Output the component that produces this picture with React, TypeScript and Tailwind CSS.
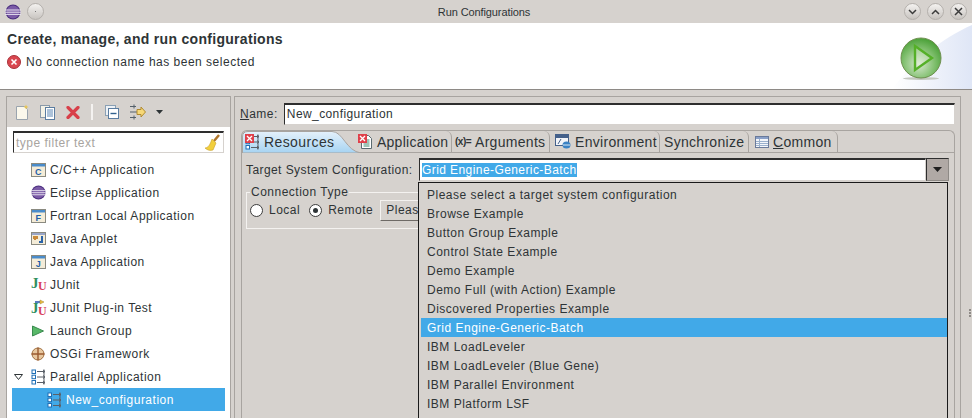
const font = "[font-family:'Liberation_Sans',Arial,sans-serif]";

function EclipseIcon({ size = 16 }: { size?: number }) {
  return (
    <svg width={size} height={size} viewBox="0 0 16 16">
      <circle cx="8" cy="8" r="7.5" fill="#4b2f7f" />
      <circle cx="8" cy="8" r="6.5" fill="#7a5aa6" />
      <path d="M0 6h16M0 8.2h16M0 10.4h16" stroke="#e8e2f0" strokeWidth="1" />
    </svg>
  );
}

function AppIcon({ letter }: { letter: string }) {
  return (
    <svg width="15" height="14" viewBox="0 0 15 14">
      <rect x="0.5" y="0.5" width="14" height="13" fill="#f4ecd8" stroke="#8a8a80" />
      <rect x="1" y="1" width="13" height="2.5" fill="#4a8ccb" />
      <text x="7.5" y="11.5" textAnchor="middle" fontSize="9" fontWeight="700" fontFamily="Liberation Sans" fill="#1f5ea8">
        {letter}
      </text>
    </svg>
  );
}

function AppletIcon() {
  return (
    <svg width="15" height="13" viewBox="0 0 15 13">
      <rect x="0.5" y="0.5" width="14" height="12" fill="#f4ecd8" stroke="#8a8a80" />
      <rect x="1" y="1" width="13" height="2" fill="#9aa6c8" />
      <path d="M2 4h5v3H5v1H3V7H2z" fill="#c98a3a" />
      <path d="M11 4v6H8" stroke="#2a63a8" strokeWidth="2" fill="none" />
    </svg>
  );
}

function JUnitIcon({ plugin = false }: { plugin?: boolean }) {
  return (
    <svg width="16" height="17" viewBox="0 0 16 17">
      {plugin && <path d="M4 3h6" stroke="#5a7cc0" strokeWidth="2" />}
      {plugin && <path d="M9 1l4 2-4 2z" fill="#f0c040" stroke="#a08030" strokeWidth="0.5" />}
      <text x="0" y={plugin ? 14 : 12} fontSize="15" fontWeight="700" fontFamily="Liberation Serif" fill="#2f8f5f">J</text>
      <text x="7" y={plugin ? 16 : 14} fontSize="12" fontWeight="700" fontFamily="Liberation Serif" fill="#d84060">U</text>
    </svg>
  );
}

function LaunchIcon() {
  return (
    <svg width="14" height="14" viewBox="0 0 14 14">
      <path d="M1.5 2l11 5-11 5z" fill="#58b868" stroke="#3a8a50" />
    </svg>
  );
}

function OsgiIcon() {
  return (
    <svg width="14" height="14" viewBox="0 0 14 14">
      <circle cx="7" cy="7" r="6" fill="#e8c8a0" stroke="#a07040" />
      <path d="M7 0.5v13M0.5 7h13" stroke="#9a5a30" strokeWidth="1.4" />
    </svg>
  );
}

function ParallelIcon({ size = 16 }: { size?: number }) {
  return (
    <svg width={size} height={size} viewBox="0 0 16 16" fill="none">
      <path d="M6 2.5h8M6 8h8M6 13.5h8M13 0.5v15" stroke="#5a6068" />
      <path d="M12 1l2 1.5-2 1.5M12 6.5l2 1.5-2 1.5M12 12l2 1.5-2 1.5" stroke="#5a6068" />
      <rect x="1" y="1" width="3.5" height="3.5" fill="#fff" stroke="#1f6fb5" />
      <rect x="1" y="6.2" width="3.5" height="3.5" fill="#fff" stroke="#1f6fb5" />
      <rect x="1" y="11.5" width="3.5" height="3.5" fill="#fff" stroke="#1f6fb5" />
    </svg>
  );
}

function ErrorIcon() {
  return (
    <svg width="14" height="14" viewBox="0 0 14 14">
      <circle cx="7" cy="7" r="6.5" fill="#d9464f" stroke="#a8323a" />
      <path d="M4.5 4.5l5 5M9.5 4.5l-5 5" stroke="#fff" strokeWidth="1.6" />
    </svg>
  );
}

function RunIcon() {
  return (
    <svg width="44" height="44" viewBox="0 0 44 44">
      <defs>
        <radialGradient id="runBall" cx="0.45" cy="0.65" r="0.7">
          <stop offset="0" stopColor="#d8e8d0" />
          <stop offset="0.55" stopColor="#82c070" />
          <stop offset="1" stopColor="#3f9a2c" />
        </radialGradient>
      </defs>
      <ellipse cx="22" cy="41.5" rx="18" ry="1.5" fill="#c4c8c0" />
      <circle cx="22" cy="21" r="20" fill="url(#runBall)" stroke="#6f8f50" />
      <path d="M16 9l17 12-17 12z" fill="#eef4e6" fillOpacity="0.35" stroke="#55b028" strokeWidth="2.4" />
    </svg>
  );
}

function HeaderSweep() {
  return (
    <svg className="absolute top-0 right-0" width="80" height="66" viewBox="0 0 80 66">
      <defs>
        <linearGradient id="sweep" x1="0" y1="0" x2="1" y2="0">
          <stop offset="0" stopColor="#ffffff" />
          <stop offset="1" stopColor="#dfe6f6" />
        </linearGradient>
      </defs>
      <path d="M0 66C20 40 50 15 80 2V66Z" fill="url(#sweep)" />
    </svg>
  );
}

function WindowButton({ children }: { children?: React.ReactNode }) {
  return (
    <div className="flex h-[17px] w-[17px] items-center justify-center rounded-full border border-[#b4b0ac] bg-gradient-to-b from-[#f4f2f0] to-[#c8c4c0]">
      {children}
    </div>
  );
}

function NewConfigIcon() {
  return (
    <svg width="14" height="16" viewBox="0 0 14 16">
      <path d="M1.5 2.5h8l3 3v10h-11z" fill="#fbf8ec" stroke="#9aa4ae" />
      <path d="M11 0.5l.7 1.8 1.8.7-1.8.7-.7 1.8-.7-1.8-1.8-.7 1.8-.7z" fill="#e8c450" />
    </svg>
  );
}

function DuplicateIcon() {
  return (
    <svg width="15" height="15" viewBox="0 0 15 15">
      <rect x="0.5" y="0.5" width="9" height="12" fill="#f4f2e6" stroke="#8a9aaa" />
      <rect x="5.5" y="2.5" width="9" height="12" fill="#fff" stroke="#5a7ca0" />
      <path d="M7 5h6M7 7h6M7 9h6M7 11h6" stroke="#5a86b4" />
    </svg>
  );
}

function DeleteIcon() {
  return (
    <svg width="14" height="13" viewBox="0 0 14 13">
      <path d="M2 1.5l10 10M12 1.5l-10 10" stroke="#d8404a" strokeWidth="3.2" strokeLinecap="round" />
    </svg>
  );
}

function CollapseIcon() {
  return (
    <svg width="14" height="14" viewBox="0 0 14 14">
      <rect x="0.5" y="0.5" width="10" height="10" fill="#eef2f6" stroke="#8aa0b4" />
      <rect x="3.5" y="3.5" width="10" height="10" fill="#fff" stroke="#5a7ca0" />
      <path d="M5.5 8.5h6" stroke="#31618e" strokeWidth="1.4" />
    </svg>
  );
}

function FilterIcon() {
  return (
    <svg width="17" height="16" viewBox="0 0 17 16" fill="none">
      <path d="M1 2.5h6M1 13.5h6" stroke="#54606a" />
      <path d="M5 0.5v4M5 11.5v4" stroke="#54606a" />
      <path d="M1 8h7" stroke="#54606a" />
      <path d="M8 5.5h4V3l4.5 5-4.5 5v-2.5H8z" fill="#f6d878" stroke="#b08a30" />
    </svg>
  );
}

function BroomIcon() {
  return (
    <svg width="16" height="17" viewBox="0 0 16 17">
      <path d="M15 1l-5 6" stroke="#b0762a" strokeWidth="2.5" />
      <path d="M8 5l4 4-3 7c-3 1-6 0-8-2 3 0 5-3 7-9z" fill="#f2cf3c" stroke="#c8a02c" strokeWidth="0.6" />
    </svg>
  );
}

function ErrorBadge() {
  return (
    <div className="absolute top-0 left-0 flex h-[9px] w-[9px] items-center justify-center bg-[#e0404a]">
      <svg width="7" height="7" viewBox="0 0 7 7">
        <path d="M1 1l5 5M6 1L1 6" stroke="#fff" strokeWidth="1.3" />
      </svg>
    </div>
  );
}

function DocIcon() {
  return (
    <svg width="15" height="16" viewBox="0 0 15 16">
      <path d="M3.5 1.5h7l3 3v10h-10z" fill="#fff" stroke="#5a6a70" />
      <path d="M5.5 6h6M5.5 8h6M5.5 10h6M5.5 12h6" stroke="#3f8a70" />
    </svg>
  );
}

function EnvIcon() {
  return (
    <svg width="16" height="15" viewBox="0 0 16 15">
      <rect x="0.5" y="0.5" width="13" height="11" fill="#f2f4f8" stroke="#44608a" />
      <rect x="1" y="1" width="12" height="3" fill="#44608a" />
      <path d="M3 10l3-5" stroke="#44608a" />
      <ellipse cx="11.5" cy="11" rx="4" ry="3.5" fill="#3a82c4" />
      <path d="M8 11h7" stroke="#d8e8f4" />
    </svg>
  );
}

function CommonIcon() {
  return (
    <svg width="14" height="12" viewBox="0 0 14 12">
      <rect x="0.5" y="0.5" width="13" height="11" fill="#f4f6fa" stroke="#6a7a9a" />
      <rect x="1" y="1" width="12" height="2" fill="#8aa0c8" />
      <path d="M1 5.5h12M1 7.5h12M1 9.5h12M4.5 3v8" stroke="#9ab0cc" />
    </svg>
  );
}

const treeItems = [
  { label: 'C/C++ Application', icon: <AppIcon letter="C" /> },
  { label: 'Eclipse Application', icon: <EclipseIcon size={15} /> },
  { label: 'Fortran Local Application', icon: <AppIcon letter="F" /> },
  { label: 'Java Applet', icon: <AppletIcon /> },
  { label: 'Java Application', icon: <AppIcon letter="J" /> },
  { label: 'JUnit', icon: <JUnitIcon /> },
  { label: 'JUnit Plug-in Test', icon: <JUnitIcon plugin /> },
  { label: 'Launch Group', icon: <LaunchIcon /> },
  { label: 'OSGi Framework', icon: <OsgiIcon /> },
];

const targetOptions = [
  'Please select a target system configuration',
  'Browse Example',
  'Button Group Example',
  'Control State Example',
  'Demo Example',
  'Demo Full (with Action) Example',
  'Discovered Properties Example',
  'Grid Engine-Generic-Batch',
  'IBM LoadLeveler',
  'IBM LoadLeveler (Blue Gene)',
  'IBM Parallel Environment',
  'IBM Platform LSF',
  'IBM Platform MPI',
];

function Tab({ icon, label, width, inset, underline }: { icon?: React.ReactNode; label: string; width: string; inset: string; underline?: number }) {
  return (
    <div className={`flex h-[21px] items-center gap-[4px] rounded-tr-[6px] border-r border-[#a8a4a0] text-[14px] tracking-[0.3px] text-[#2e3436] ${inset} ${width}`}>
      {icon}
      <span className="whitespace-nowrap">
        {underline === undefined ? (
          label
        ) : (
          <>
            {label.slice(0, underline)}
            <span className="underline">{label[underline]}</span>
            {label.slice(underline + 1)}
          </>
        )}
      </span>
    </div>
  );
}

function Radio({ checked, label }: { checked?: boolean; label: string }) {
  return (
    <div className="flex items-center gap-[6px]">
      <div className="flex h-[13px] w-[13px] items-center justify-center rounded-full border border-[#3c3c3c] bg-white">
        {checked && <div className="h-[5px] w-[5px] rounded-full bg-[#2e3436]" />}
      </div>
      <span>{label}</span>
    </div>
  );
}

export default function App() {
  return (
    <div className={`flex h-[418px] w-[972px] flex-col overflow-hidden bg-[#d6d2ce] text-[12px] leading-[14px] tracking-[0.5px] text-[#2e3436] ${font}`}>
      {/* window title */}
      <div className="flex h-[23px] shrink-0 items-center pr-[5px] pl-[5px]">
        <EclipseIcon />
        <div className="ml-[6px]">
          <WindowButton>
            <div className="h-[1px] w-[1px] bg-[#777]" />
          </WindowButton>
        </div>
        <div className="flex-1 pl-[20px] text-center text-[11px] tracking-[-0.1px]">Run Configurations</div>
        <div className="flex gap-[6px]">
          <WindowButton>
            <svg width="9" height="6" viewBox="0 0 9 6"><path d="M1 1l3.5 3.5L8 1" fill="none" stroke="#3c3c3c" strokeWidth="1.5" /></svg>
          </WindowButton>
          <WindowButton>
            <svg width="9" height="6" viewBox="0 0 9 6"><path d="M1 5l3.5-3.5L8 5" fill="none" stroke="#3c3c3c" strokeWidth="1.5" /></svg>
          </WindowButton>
          <WindowButton>
            <svg width="9" height="9" viewBox="0 0 9 9"><path d="M1 1l7 7M8 1L1 8" fill="none" stroke="#3c3c3c" strokeWidth="1.5" /></svg>
          </WindowButton>
        </div>
      </div>

      {/* dialog header */}
      <div className="relative flex h-[67px] shrink-0 justify-between overflow-hidden border-b border-[#8e8a86] bg-white">
        <HeaderSweep />
        <div className="pt-[8px] pl-[7px]">
          <div className="text-[14px] leading-[16px] font-bold tracking-[0.3px]">Create, manage, and run configurations</div>
          <div className="mt-[8px] flex items-center gap-[5px]">
            <ErrorIcon />
            <span>No connection name has been selected</span>
          </div>
        </div>
        <div className="relative pt-[14px] pr-[29px]">
          <RunIcon />
        </div>
      </div>

      {/* body */}
      <div className="flex min-h-0 flex-1 pt-[6px] pl-[6px]">
        {/* left pane */}
        <div className="flex w-[225px] shrink-0 flex-col border border-b-0 border-[#a8a4a0]">
          <div className="flex h-[30px] shrink-0 items-center pl-[8px]">
            <NewConfigIcon />
            <div className="ml-[11px]"><DuplicateIcon /></div>
            <div className="ml-[11px]"><DeleteIcon /></div>
            <div className="mr-[12px] ml-[11px] h-[16px] w-[2px] bg-[#f4f2f0]" />
            <CollapseIcon />
            <div className="ml-[10px]"><FilterIcon /></div>
            <svg className="ml-[10px]" width="7" height="4" viewBox="0 0 7 4"><path d="M0 0h7L3.5 4z" fill="#2e3436" /></svg>
          </div>
          <div className="flex flex-1 flex-col bg-white">
            <div className="mx-[6px] mt-[4px] flex h-[22px] shrink-0 items-center justify-between border border-t-2 border-r-[#d6d2ce] border-b-[#d6d2ce] border-l-[#2e2e2e] border-t-[#2e2e2e] bg-white pr-[3px] pl-[2px] text-[#a8a4a0]">
              <span>type filter text</span>
              <BroomIcon />
            </div>
            <div className="mt-[5px] flex flex-col pl-[5px]">
              {treeItems.map((item) => (
                <div key={item.label} className="flex h-[23px] items-center">
                  <div className="w-[19px] shrink-0" />
                  <div className="flex w-[19px] shrink-0">{item.icon}</div>
                  <span className="whitespace-nowrap">{item.label}</span>
                </div>
              ))}
              <div className="flex h-[23px] items-center">
                <div className="flex w-[19px] shrink-0 pl-[2px]">
                  <svg width="9" height="6" viewBox="0 0 9 6"><path d="M0.5 0.5h8L4.5 5.5z" fill="#fff" stroke="#2e3436" /></svg>
                </div>
                <div className="flex w-[19px] shrink-0"><ParallelIcon /></div>
                <span className="whitespace-nowrap">Parallel Application</span>
              </div>
              <div className="mr-[5px] flex h-[23px] items-center bg-[#41a9e8] text-white">
                <div className="w-[35px] shrink-0" />
                <div className="flex w-[19px] shrink-0"><ParallelIcon /></div>
                <span className="whitespace-nowrap">New_configuration</span>
              </div>
            </div>
          </div>
        </div>

        {/* right pane */}
        <div className="ml-[3px] flex w-[727px] shrink-0 flex-col border border-b-0 border-[#a8a4a0] pl-[6px]">
          <div className="flex h-[33px] shrink-0 items-center pr-[5px]">
            <span className="-ml-[1px]"><span className="underline">N</span>ame:</span>
            <div className="ml-[6px] flex h-[22px] flex-1 items-center border border-t-2 border-r-[#d6d2ce] border-b-[#d6d2ce] border-l-[#2e2e2e] border-t-[#2e2e2e] bg-white pl-[2px] tracking-[0.4px]">
              New_configuration
            </div>
          </div>
          <div className="mr-[5px] flex min-h-0 flex-1 flex-col rounded-t-[6px] border border-b-0 border-[#a8a4a0]">
            {/* tab strip */}
            <div className="flex h-[22px] shrink-0 border-b border-[#a8a4a0]">
              <div className="relative h-[22px] w-[116px] shrink-0">
                <svg className="absolute top-0 left-0" width="120" height="22" viewBox="0 0 120 22">
                  <defs>
                    <linearGradient id="tabFill" x1="0" y1="0" x2="0" y2="1">
                      <stop offset="0" stopColor="#e4f1fb" />
                      <stop offset="1" stopColor="#a6d3f2" />
                    </linearGradient>
                  </defs>
                  <path d="M0.5 22V6Q0.5 0.5 6 0.5H90C101 0.5 104 20 119 22Z" fill="url(#tabFill)" stroke="#a8a4a0" />
                </svg>
                <div className="relative flex h-[22px] items-center gap-[3px] pl-[3px] text-[14px] tracking-[0.4px] text-[#2e3436]">
                  <div className="relative h-[16px] w-[16px]">
                    <ParallelIcon />
                    <ErrorBadge />
                  </div>
                  <span>Resources</span>
                </div>
              </div>
              <div className="flex">
                <div className="relative flex h-[21px] w-[94px] items-center gap-[4px] rounded-tr-[6px] border-r border-[#a8a4a0] text-[14px] tracking-[0.25px] text-[#2e3436]">
                  <div className="relative h-[16px] w-[15px]">
                    <DocIcon />
                    <ErrorBadge />
                  </div>
                  <span>Application</span>
                </div>
                <Tab
                  width="w-[98px]"
                  inset="pl-[3px]"
                  label="Arguments"
                  icon={<span className="w-[16px] text-[10px] font-bold tracking-[-0.5px]">(x)=</span>}
                />
                <Tab width="w-[110px]" inset="pl-[5px]" label="Environment" icon={<EnvIcon />} />
                <Tab width="w-[89px]" inset="pl-[4px]" label="Synchronize" />
                <Tab width="w-[89px]" inset="pl-[6px]" label="Common" underline={0} icon={<CommonIcon />} />
              </div>
            </div>

            {/* tab content */}
            <div className="relative flex min-h-0 flex-1 flex-col pr-[5px] pl-[4px]">
              <div className="mt-[5px] flex h-[23px] shrink-0 items-center">
                <span className="w-[173px] shrink-0 whitespace-nowrap tracking-[0.42px]">Target System Configuration:</span>
                <div className="flex h-[23px] flex-1 items-center border border-t-2 border-r-[#d6d2ce] border-b-[#d6d2ce] border-l-[#2e2e2e] border-t-[#2e2e2e] bg-white pl-[2px]">
                  <span className="bg-[#41a9e8] tracking-[0.42px] text-white">Grid Engine-Generic-Batch</span>
                </div>
                <div className="flex h-[23px] w-[23px] shrink-0 items-center justify-center border border-[#2e2e2e] border-r-[#8e8a86] border-b-[#8e8a86] bg-[#b0a9a5]">
                  <svg width="9" height="5" viewBox="0 0 9 5"><path d="M0 0h9L4.5 5z" fill="#1f1f1f" /></svg>
                </div>
              </div>

              {/* connection type group */}
              <fieldset className="mt-[5px] h-[43px] w-[190px] border border-[#f4f2f0] pl-[3px] outline-0">
                <legend className="px-[1px] leading-[12px]">Connection Type</legend>
                <div className="flex h-[24px] items-center">
                  <Radio label="Local" />
                  <div className="ml-[9px]"><Radio checked label="Remote" /></div>
                  <div className="ml-[7px] flex h-[21px] flex-1 items-center overflow-hidden border border-t-[#f4f2f0] border-r-[#6e6a66] border-b-[#6e6a66] border-l-[#f4f2f0] pl-[5px]">
                    Please
                  </div>
                </div>
              </fieldset>

              {/* open combo list */}
              <div className="absolute top-[29px] left-[176px] z-10 h-[260px] w-[530px] overflow-hidden border border-[#1a1a1a] bg-[#d6d2ce] pt-[2px] pl-[2px]">
                {targetOptions.map((option) => (
                  <div
                    key={option}
                    className={`flex h-[19px] items-center pl-[6px] ${option === 'Grid Engine-Generic-Batch' ? 'bg-[#41a9e8] text-white' : ''}`}
                  >
                    {option}
                  </div>
                ))}
              </div>
            </div>
          </div>
        </div>

        {/* sash dots */}
        <div className="flex flex-1 items-center justify-center">
          <div className="flex flex-col gap-[1px] pt-[112px] pl-[6px]">
            <div className="h-[2px] w-[2px] bg-[#8e8a86]" />
            <div className="h-[2px] w-[2px] bg-[#8e8a86]" />
            <div className="h-[2px] w-[2px] bg-[#8e8a86]" />
          </div>
        </div>
      </div>
    </div>
  );
}
